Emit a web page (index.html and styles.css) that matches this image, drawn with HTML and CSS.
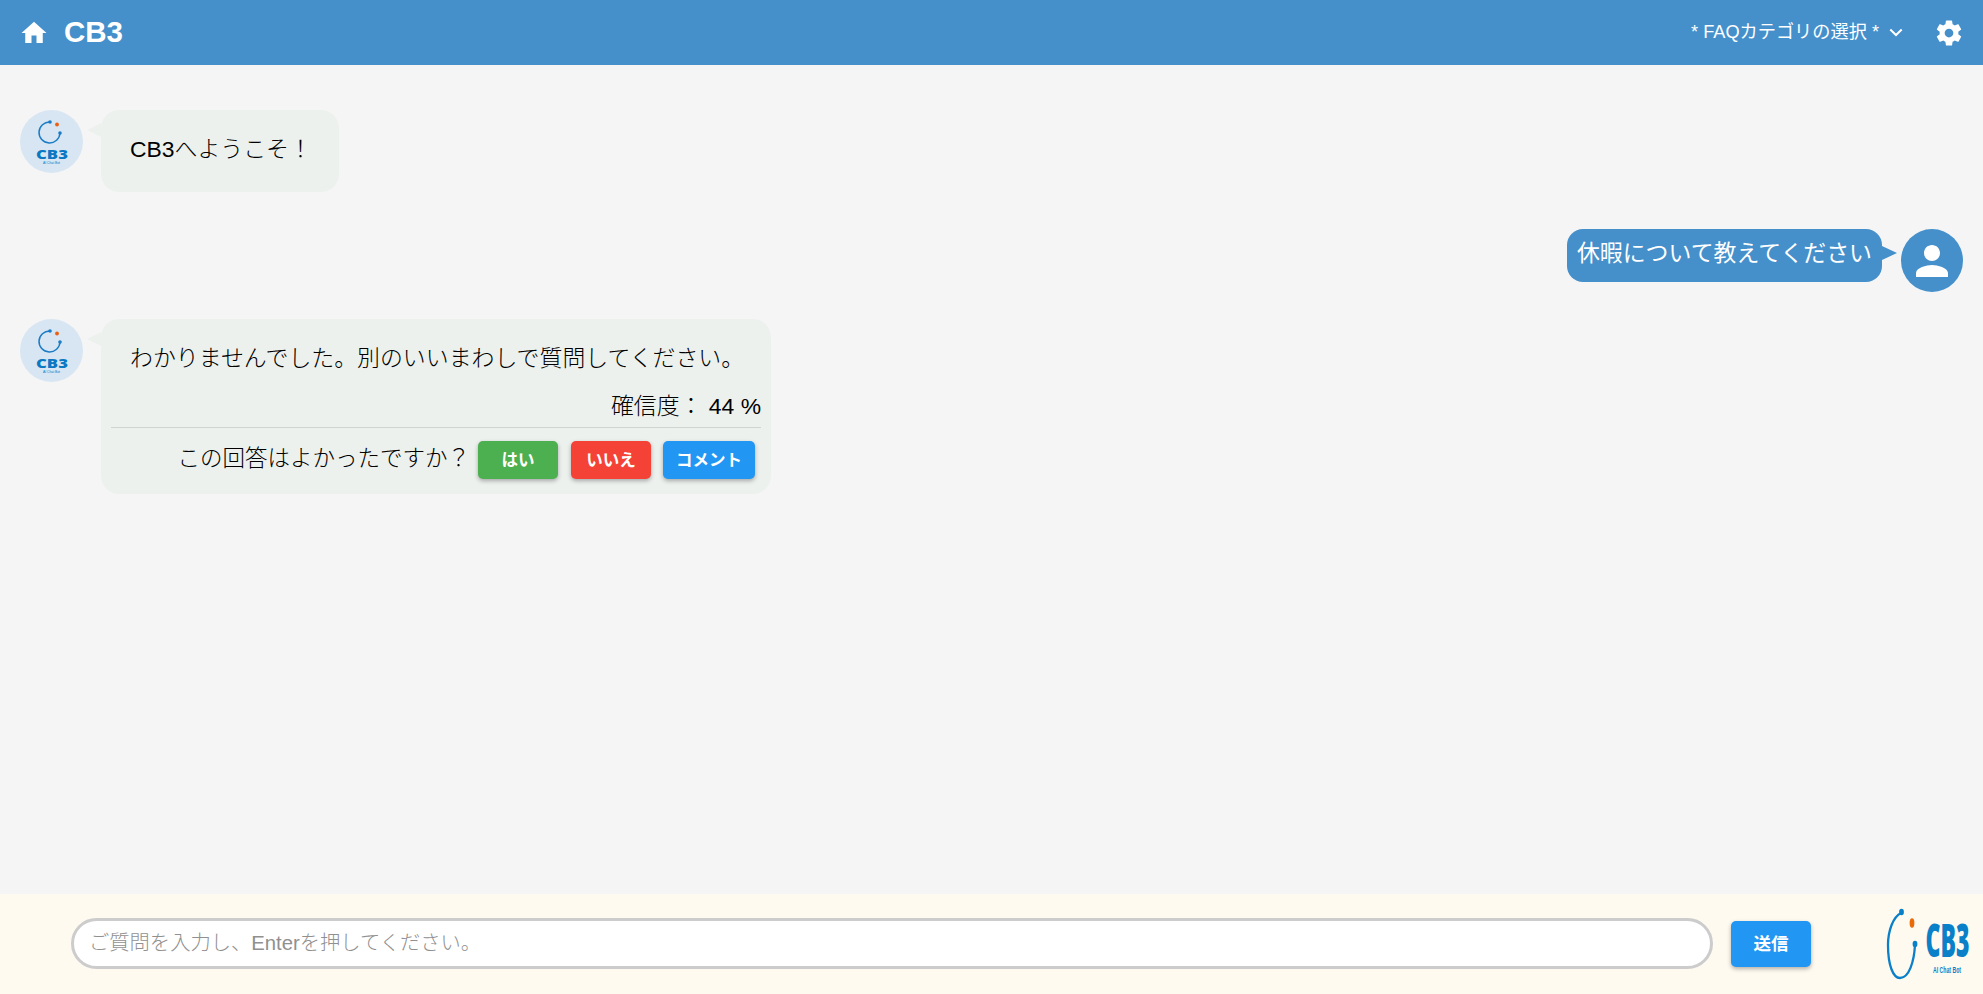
FILE: index.html
```html
<!DOCTYPE html>
<html lang="ja">
<head>
<meta charset="utf-8">
<title>CB3</title>
<link rel="stylesheet" href="styles.css">
</head>
<body>
<div class="app">
  <header class="topbar">
    <svg class="icon-home" viewBox="0 0 24 24"><path d="M10 20v-6h4v6h5v-8h3L12 3 2 12h3v8z"/></svg>
    <span class="brand">CB3</span>
    <span class="spacer"></span>
    <span class="category">* FAQカテゴリの選択 *</span>
    <svg class="icon-chevron" viewBox="0 0 14 9"><path d="M1.3 1.5 7 7l5.7-5.5"/></svg>
    <svg class="icon-gear" viewBox="0 0 24 24"><path d="M19.43 12.98c.04-.32.07-.64.07-.98s-.03-.66-.07-.98l2.11-1.65c.19-.15.24-.42.12-.64l-2-3.46c-.12-.22-.39-.3-.61-.22l-2.49 1c-.52-.4-1.08-.73-1.69-.98l-.38-2.65C14.46 2.18 14.25 2 14 2h-4c-.25 0-.46.18-.49.42l-.38 2.65c-.61.25-1.17.59-1.69.98l-2.49-1c-.23-.09-.49 0-.61.22l-2 3.46c-.13.22-.07.49.12.64l2.11 1.65c-.04.32-.07.65-.07.98s.03.66.07.98l-2.11 1.65c-.19.15-.24.42-.12.64l2 3.46c.12.22.39.3.61.22l2.49-1c.52.4 1.08.73 1.69.98l.38 2.65c.03.24.24.42.49.42h4c.25 0 .46-.18.49-.42l.38-2.65c.61-.25 1.17-.59 1.69-.98l2.49 1c.23.09.49 0 .61-.22l2-3.46c.12-.22.07-.49-.12-.64l-2.11-1.65zM12 15.5c-1.93 0-3.5-1.57-3.5-3.5s1.57-3.5 3.5-3.5 3.5 1.57 3.5 3.5-1.57 3.5-3.5 3.5z"/></svg>
  </header>

  <main class="chat">
    <div class="row row-bot row-first">
      <svg class="avatar" viewBox="0 0 63 63">
        <circle cx="31.5" cy="31.5" r="31.5" fill="#d8e6f3"/>
        <path d="M30 12A10.500 10.500 0 1 0 40 23" fill="none" stroke="#1a7cc4" stroke-width="1.500"/>
        <circle cx="30" cy="12" r="1.800" fill="#1a7cc4"/>
        <circle cx="40" cy="23" r="1.800" fill="#1a7cc4"/>
        <circle cx="37" cy="14.500" r="1.900" fill="#ea5f14"/>
        <text class="avatar-name" x="32" y="48.500" textLength="32" lengthAdjust="spacingAndGlyphs">CB3</text>
        <text class="avatar-sub" x="31.500" y="54" textLength="17" lengthAdjust="spacingAndGlyphs">AI Chat Bot</text>
      </svg>
      <div class="bubble bubble-bot bubble-welcome">
        <p class="msg">CB3へようこそ！</p>
      </div>
    </div>

    <div class="row row-user">
      <div class="bubble bubble-user">休暇について教えてください</div>
      <div class="avatar-user">
        <svg viewBox="0 0 24 24"><path d="M12 12c2.21 0 4-1.79 4-4s-1.79-4-4-4-4 1.79-4 4 1.79 4 4 4zm0 2c-2.67 0-8 1.34-8 4v2h16v-2c0-2.66-5.33-4-8-4z"/></svg>
      </div>
    </div>

    <div class="row row-bot">
      <svg class="avatar" viewBox="0 0 63 63">
        <circle cx="31.5" cy="31.5" r="31.5" fill="#d8e6f3"/>
        <path d="M30 12A10.500 10.500 0 1 0 40 23" fill="none" stroke="#1a7cc4" stroke-width="1.500"/>
        <circle cx="30" cy="12" r="1.800" fill="#1a7cc4"/>
        <circle cx="40" cy="23" r="1.800" fill="#1a7cc4"/>
        <circle cx="37" cy="14.500" r="1.900" fill="#ea5f14"/>
        <text class="avatar-name" x="32" y="48.500" textLength="32" lengthAdjust="spacingAndGlyphs">CB3</text>
        <text class="avatar-sub" x="31.500" y="54" textLength="17" lengthAdjust="spacingAndGlyphs">AI Chat Bot</text>
      </svg>
      <div class="bubble bubble-bot bubble-answer">
        <p class="msg">わかりませんでした。別のいいまわしで質問してください。</p>
        <p class="confidence">確信度： 44 %</p>
        <div class="feedback">
          <span class="feedback-label">この回答はよかったですか？</span>
          <button class="btn btn-yes">はい</button>
          <button class="btn btn-no">いいえ</button>
          <button class="btn btn-comment">コメント</button>
        </div>
      </div>
    </div>
  </main>

  <footer class="composer">
    <input class="composer-input" type="text" placeholder="ご質問を入力し、Enterを押してください。">
    <button class="btn btn-send">送信</button>
    <svg class="footer-logo" viewBox="0 0 84 74">
      <path d="M15 6C7 10 2 24 2 38C2 58 7 71 14 71C23 71 28 55 29 38" fill="none" stroke="#0a80c8" stroke-width="2.300"/>
      <ellipse cx="15.500" cy="5" rx="2.400" ry="3.300" fill="#0a80c8"/>
      <ellipse cx="29" cy="37" rx="2.400" ry="3.300" fill="#0a80c8"/>
      <ellipse cx="26" cy="16" rx="2.400" ry="4.800" fill="#ea6a0a"/>
      <text class="logo-name" x="61.500" y="23.800" textLength="44" lengthAdjust="spacingAndGlyphs" transform="scale(1 2.100)">CB3</text>
      <text class="logo-sub" x="61" y="66" textLength="28" lengthAdjust="spacingAndGlyphs">AI Chat Bot</text>
    </svg>
  </footer>
</div>
</body>
</html>
```
FILE: styles.css
```css
* { box-sizing: border-box; }
html, body { margin: 0; height: 100%; overflow: hidden; }
body {
  font-family: "Liberation Sans", "Noto Sans CJK JP", sans-serif;
  color: #000;
  background: #f5f5f5;
}
.app { display: flex; flex-direction: column; height: 100vh; }

.topbar {
  display: flex;
  align-items: center;
  flex: 0 0 65px;
  height: 65px;
  padding: 0 19px 0 19px;
  background: #4590cb;
  color: #fff;
}
.icon-home { width: 30px; height: 30px; fill: #fff; margin-right: 15px; }
.brand { font-size: 29.5px; font-weight: 700; position: relative; top: -1px; }
.spacer { flex: 1; }
.category { font-size: 18.2px; position: relative; top: -3px; }
.icon-chevron { width: 14px; height: 9px; margin: 0 0 0 10px; fill: none; stroke: #fff; stroke-width: 2; }
.icon-gear { width: 30px; height: 30px; fill: #fff; margin-left: 31px; }

.chat { flex: 1; padding: 45px 20px 0; font-size: 22.9px; font-weight: 300; }
.row { display: flex; align-items: flex-start; }
.row-first { margin-bottom: 37px; }
.row-user { justify-content: flex-end; margin-bottom: 27px; }

.avatar { width: 63px; height: 63px; flex: none; margin-right: 18px; }
.avatar-name { font: 900 13px "Noto Sans", "Liberation Sans", sans-serif; fill: #0b78c2; text-anchor: middle; }
.avatar-sub { font: 400 3.6px "Liberation Sans", sans-serif; fill: #0b78c2; text-anchor: middle; }

.bubble { position: relative; }
.bubble-bot { background: #edf1ee; border-radius: 18px; }
.bubble-bot::before {
  content: "";
  position: absolute;
  left: -14px;
  top: 13px;
  border-style: solid;
  border-width: 7px 14px 7px 0;
  border-color: transparent #edf1ee transparent transparent;
}
.bubble-welcome { padding: 18px 27px 22px 10px; }
.bubble-answer { width: 670px; padding: 18px 10px 0; height: 175px; }
.msg { margin: 0 0 0 19px; line-height: 42px; white-space: nowrap; }
.confidence { margin: 12px 0 0; line-height: 30px; text-align: right; padding-bottom: 6px; border-bottom: 1px solid #d0d4d1; }
.feedback { display: flex; align-items: center; justify-content: flex-end; padding: 13px 6px 0 0; }
.feedback-label { font-size: 22.5px; margin-right: 8px; position: relative; top: -4px; }

.btn {
  border: none;
  border-radius: 5px;
  color: #fff;
  font-family: "Liberation Sans", "Noto Sans CJK JP", sans-serif;
  font-weight: 700;
  font-size: 16.5px;
  height: 38px;
  padding: 0 0 2px;
  box-shadow: 0 2px 4px rgba(0,0,0,.3);
}
.btn-yes { width: 80px; background: #4caf50; margin-right: 13px; }
.btn-no { width: 80px; background: #f44336; margin-right: 12px; }
.btn-comment { width: 92px; background: #2196f3; }

.bubble-user {
  background: #4590cb;
  color: #fff;
  border-radius: 16px;
  height: 53px;
  line-height: 48px;
  padding: 0 10px;
  white-space: nowrap;
  margin-right: 19px;
  font-weight: 400;
}
.bubble-user::after {
  content: "";
  position: absolute;
  right: -15px;
  top: 17px;
  border-style: solid;
  border-width: 7px 0 7px 15px;
  border-color: transparent transparent transparent #4590cb;
}
.avatar-user {
  display: flex;
  align-items: center;
  justify-content: center;
  width: 62px;
  height: 63px;
  border-radius: 50%;
  background: #4590cb;
}
.avatar-user svg { width: 48px; height: 48px; fill: #fff; }

.composer {
  display: flex;
  align-items: center;
  flex: 0 0 100px;
  height: 100px;
  padding: 0 13px 0 71px;
  background: #fffaf0;
}
.composer-input {
  width: 1642px;
  height: 51px;
  margin: -1px 18px 0 0;
  padding: 0 15px;
  border: 3px solid #ccc;
  border-radius: 26px;
  background: #fff;
  font-family: "Liberation Sans", "Noto Sans CJK JP", sans-serif;
  font-size: 20.3px;
  font-weight: 300;
  outline: none;
}
.composer-input::placeholder { color: #909090; opacity: 1; }
.btn-send { width: 80px; height: 46px; font-size: 17.5px; background: #2196f3; margin-top: -1px; }
.footer-logo { width: 84px; height: 74px; margin: 0 0 0 auto; overflow: visible; }
.logo-name { font: 900 22px "Noto Sans", "Liberation Sans", sans-serif; fill: #0a80c8; text-anchor: middle; }
.logo-sub { font: 700 9px "Liberation Sans", sans-serif; fill: #0a80c8; text-anchor: middle; }
```
